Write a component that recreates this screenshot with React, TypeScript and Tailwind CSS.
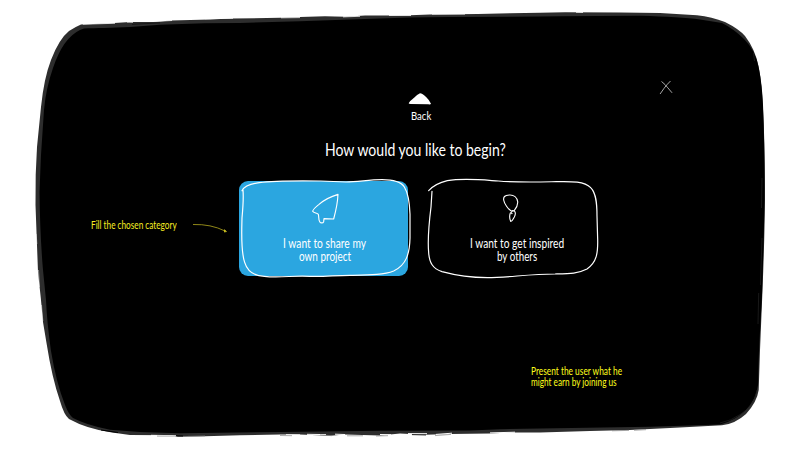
import { useLayoutEffect, useRef, useState } from "react";
import type { ReactNode } from "react";

/** A single line of condensed lettering, squeezed to the given width. */
function Line({ width, children }: { width: number; children: string }) {
  const ref = useRef<HTMLSpanElement>(null);
  const [scale, setScale] = useState(0.8);
  useLayoutEffect(() => {
    if (ref.current) setScale(width / ref.current.offsetWidth);
  }, [width, children]);
  return (
    <span className="block whitespace-nowrap" style={{ width }}>
      <span ref={ref} className="inline-block origin-left" style={{ transform: `scaleX(${scale})` }}>
        {children}
      </span>
    </span>
  );
}

function Frame() {
  return (
    <svg className="absolute inset-0" width="800" height="450" viewBox="0 0 800 450" fill="none">
      <path
        fill="#2d2d2d"
        d="M81 24.5C97 24 115 23.300 130 22L153 22L171 20.500L210 19.500L232 18.500L280 17.800L300 17L325 16.300L345 16.700L365 15.500L388 15.400L410 15.300L430 14.400L478 14L510 13.200L540 12.700L565 12.200L620 12.500L660 13L697 15.300Q712 17 725 22Q739 29 745 36Q755 49 758.500 66Q762 84 763.300 115Q765 150 765 200Q764.500 240 762.500 290L760 350L758.700 390Q757 402 746 414Q735 424 722 425.300L680 427.500L630 430L590 431L540 432.500L510 432.600L490 433.600L450 434L425 434.800L400 433.500L380 435.500L345 434.500L330 435.700L300 434.500L280 434.500L240 435.300L205 436.300L178 436.700L172 435.300L130 435L112 432.500Q87 429 69 419Q64 415 60 401Q52 378 46.500 343L43 322L40.800 298L38 272L36.500 232L35.500 205L35.700 175L37 147L39 127L41 107Q44 78 51 60Q59 39 69 31Q75 27 81 24.500Z"
      />
      <path
        fill="#000"
        d="M84 28.500C96 28 112 28 130 27L160 24.800L205 23.300L240 23L300 21.200L350 19.500L410 17.500L450 17L540 16.600L560 16.200L640 15.800Q680 17 700 19.500L722 23Q734 29 744 39Q750 45 753.500 52Q757.500 60 759 69Q762 84 763 105Q764.800 150 764.500 200L763.800 235L762 295L759 350L758 385Q756 400 745 411Q734 421 720 424.500L650 426.800L540 428.400L500 429.300L470 430.500L380 430.800L280 432L180 433.200L140 432L110 429.800Q86 425 73 418Q69 415 65 405Q56 382 51 351Q47 323 46 300L43 270Q40 235 39.500 192L41 155L44 110Q46 88 53 68Q63 38 80 30Z"
      />
      <g stroke="#000" strokeWidth="1">
        <path d="M101 430L118 432.500M176 435.800L183 436M412 434.600L426 434.900" />
        <path d="M132 24.300L160 22.900" opacity=".5" />
      </g>
      <g stroke="#fff" strokeWidth="1">
        <path d="M83 24.200L115 23.300M127 22.100L133 22.300M152 21.500L172 20.500M205 18.700L233 18.300M281 17.800L300 17.600M343 16.900L360 16.300M389 15.500L411 15.500M432 14.200L465 14.100M576 12.300L583 12.500" opacity=".8" />
        <path d="M286 434.700L300 434.900M307 434.300L326 434.600M335 434.200L345 434.500M380 434.500L391 434.700M408 433.600L427 433.700M436 434.400L452 433.200M490 432.900L515 432.200M151 435.300L176 435.700" />
        <path d="M39.500 111L38 122M36 142L35.700 152M36.200 234L36.900 244M38.500 270L39.500 287M41.500 305L42.800 321" opacity=".45" />
      </g>
      <g stroke="#888" strokeWidth=".7">
        <path d="M157 436.100H176M188 436.400L205 436M280 435.500L292 435.700M320 434.900L332 435.700M347 435.800H363M376 436L388 435.700M435 435.600L451 434.400M612 430.800L629 430.400M634 430.300L646 429.700" />
      </g>
      <g stroke="#222" strokeWidth=".7">
        <path d="M762 178L761.500 208M762 238L760.500 285M758.700 293L758 324M753.500 53L754.500 61" />
        <path d="M757 390Q755 405 741 414Q731 421 720 423" />
      </g>
    </svg>
  );
}

function CardOutline({ d }: { d: string }) {
  return (
    <svg
      className="pointer-events-none absolute -left-[9px] -top-[11px]"
      width="190"
      height="115"
      viewBox="0 0 570 345"
      fill="none"
      stroke="#fff"
      strokeWidth="3.600"
      strokeLinecap="round"
      strokeLinejoin="round"
    >
      <path d={d} />
    </svg>
  );
}

function Card({ filled, outline, icon, children }: { filled?: boolean; outline: string; icon: string; children: ReactNode }) {
  return (
    <button
      type="button"
      className={`relative flex h-[95px] w-[169px] flex-col items-center rounded-[9px] pt-[10px] text-[13px] leading-[13.300px] text-white ${filled ? "bg-[#2ba6e0]" : "bg-transparent"}`}
    >
      <CardOutline d={outline} />
      <svg className="mb-[12px] h-[34px] w-[34px] shrink-0" viewBox="0 0 102 102" fill="none" stroke="#fff" strokeWidth="3.400" strokeLinejoin="round" strokeLinecap="round">
        <path d={icon} />
      </svg>
      {children}
    </button>
  );
}

export default function App() {
  return (
    <main className="relative flex h-[450px] w-[800px] flex-col overflow-hidden bg-white font-['Lato',sans-serif] text-white">
      <Frame />
      <header className="relative flex h-[124px] items-start justify-between pl-[408px] pr-[127px] pt-[80px]">
        <button type="button" className="flex w-[23px] flex-col items-center pt-[13px] text-[11px] leading-[14px]">
          <svg className="mb-[4px]" width="23" height="12" viewBox="0 0 69 36" fill="#fff">
            <path d="M2 31Q3 26 13 19Q30 3 36 1Q43 1 55 13Q65 23 69 32Q68 35 61 34L8 33Q2 33 2 31Z" />
          </svg>
          <div className="translate-x-[1px]">
            <Line width={20}>Back</Line>
          </div>
        </button>
        <button type="button" aria-label="Close" className="pt-px">
          <svg width="14" height="14" viewBox="0 0 14 14" fill="none" stroke="#ddd" strokeWidth=".75" strokeLinecap="round">
            <path d="M2.800 .7Q6.800 4 8.300 6.200L12.800 11.500M11.200 .3Q7.300 4 4.800 7.700L1.300 12.700" />
          </svg>
        </button>
      </header>

      <h1 className="relative ml-[325px] mt-[13px] text-[18px] leading-[24px]">
        <Line width={181}>How would you like to begin?</Line>
      </h1>

      <section className="relative mt-[20px] flex items-start">
        <div className="flex w-[239px] items-start pl-[91px] pt-[37px] text-[11px] leading-[13px] text-[#f7ee22]">
          <Line width={86}>Fill the chosen category</Line>
          <svg className="ml-[15px] mt-[5px]" width="38" height="13" viewBox="0 0 38 13" fill="none" stroke="#b5a91e" strokeWidth=".8">
            <path d="M1 1.500Q19 1 33 8" />
            <path d="M32.500 6.500L34.500 8.600L32 9" fill="#f7ee22" />
          </svg>
        </div>

        <Card
          filled
          outline="M36 62C42 50 60 42 88 38C132 32 200 32 272 33L348 36C385 36 415 29 456 29C493 29 513 35 523 51C535 70 539 101 540 133V204C539 251 529 285 491 303C463 314 424 315 369 316C320 315 286 321 239 319C194 315 151 325 103 319C72 318 52 303 44 277C32 243 35 191 36 144C39 112 41 84 39 61"
          icon="M93 10C73 16 51 27 36 40C26 48 17 57 17 61C19 66 31 66 34 70C36 76 34 87 38 92C41 97 48 97 50 92L51 83L80 84C86 62 92 34 93 10Z"
        >
          <div className="flex translate-x-[1px] flex-col items-center">
            <Line width={83}>I want to share my</Line>
            <Line width={52}>own project</Line>
          </div>
        </Card>

        <div className="w-[21px] shrink-0" />

        <Card
          outline="M26 62C37 50 52 39 82 32C131 24 178 29 235 33C296 38 359 36 409 35C456 34 494 34 512 53C529 70 531 102 531 138L533 208C534 250 530 277 501 297C474 311 449 311 405 312C325 312 265 323 202 323C151 323 99 314 66 305C38 296 28 278 26 248C22 205 27 159 33 111L36 64"
          icon="M44 61C33 55 22 38 20 27C19 18 22 13 37 12C51 11 60 20 62 32C63 42 57 52 52 58C48 62 43 61 46 59L52 60M40 66C37 74 38 84 41 91C46 92 48 84 52 78C55 72 56 65 53 61M42 64L45 68"
        >
          <div className="flex translate-x-[3px] flex-col items-center">
            <Line width={94}>I want to get inspired</Line>
            <Line width={40}>by others</Line>
          </div>
        </Card>
      </section>

      <p className="relative ml-[531px] mt-[89px] text-[11px] leading-[11.200px] text-[#ffff1a]">
        <Line width={91}>Present the user what he</Line>
        <Line width={86}>might earn by joining us</Line>
      </p>
    </main>
  );
}
